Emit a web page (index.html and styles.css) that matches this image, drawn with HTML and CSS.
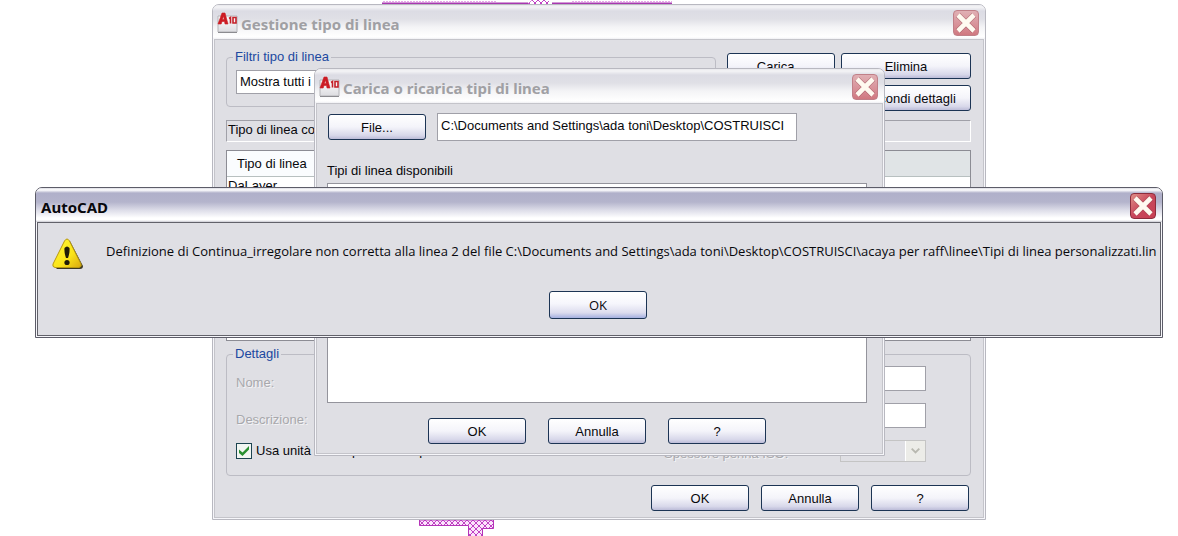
FILE: index.html
```html
<!DOCTYPE html>
<html lang="it">
<head>
    <meta charset="utf-8">
    <meta name="viewport" content="width=device-width, initial-scale=1">
    <title>AutoCAD</title>
    <link rel="stylesheet" href="styles.css">
</head>
<body>
    <!-- Shared icons -->
    <svg class="defs" aria-hidden="true">
        <defs>
            <pattern id="hatch" width="6" height="6" patternUnits="userSpaceOnUse">
                <path d="M0 0l6 6M6 0l-6 6" stroke="#c040c4" stroke-width="1" fill="none"/>
            </pattern>
            <linearGradient id="sheet" x1="0" y1="0" x2="0" y2="1">
                <stop offset="0" stop-color="#ffffff"/>
                <stop offset="1" stop-color="#dcdce0"/>
            </linearGradient>
            <linearGradient id="yellow" x1="0" y1="0" x2="1" y2="1">
                <stop offset="0" stop-color="#fff838"/>
                <stop offset=".6" stop-color="#fbe418"/>
                <stop offset="1" stop-color="#d8a810"/>
            </linearGradient>
            <symbol id="cross" viewBox="0 0 26 26">
                <path d="M5 5L21 21M21 5L5 21" stroke="#8c3c48" stroke-width="6" opacity=".55"/>
                <path d="M5 5L21 21M21 5L5 21" stroke="#fffaf0" stroke-width="4.6"/>
            </symbol>
        </defs>
    </svg>

    <div class="desktop">
        <svg class="drawing drawing-top" width="292" height="6" aria-hidden="true">
            <path d="M0 3.5H290" stroke="#a838b0" stroke-width="2"/>
            <path d="M1 1.5H115M190 1.5H290" stroke="#e8a8ea" stroke-dasharray="2 1"/>
            <path d="M146 0H170V4H146z" fill="#fff"/>
            <path d="M146 3.500L150 0H166L170 3.500V5H146z" fill="url(#hatch)"/>
            <path d="M228 4.5H272" stroke="#c868cc" stroke-dasharray="3 2"/>
        </svg>
        <svg class="drawing drawing-bottom" width="78" height="18" aria-hidden="true">
            <path d="M.5 0V5.500H49.500V18H63.500V8.500H74.500V0z" fill="#fbe4fb"/>
            <path d="M.5 0V5.500H49.500V18H63.500V8.500H74.500V0z" fill="url(#hatch)" stroke="#b434b8"/>
        </svg>

        <!-- Linetype manager -->
        <section class="window manager inactive">
            <header class="titlebar">
                <svg class="app-icon" width="21" height="22" viewBox="0 0 21 22" aria-hidden="true">
                    <path d="M1 4H20V20H1z" fill="url(#sheet)" stroke="#b4b4b8"/>
                    <path d="M1 20.500H20" stroke="#8c8c90"/>
                    <path fill-rule="evenodd" d="M1 12L5 1H8L11 12H8L7.500 9.500H5L4.200 12zM5.500 7.500H7.200L6.500 4z" fill="#cc1c24" stroke="#cc1c24" stroke-width=".6"/>
                    <path d="M12 6.500L13.500 5.500V11.500M16 5.500H19V11H16z" fill="none" stroke="#c42028" stroke-width="1.600"/>
                </svg>
                <h2>Gestione tipo di linea</h2>
                <button class="close" aria-label="Chiudi"><svg width="26" height="26"><use href="#cross"/></svg></button>
            </header>
            <div class="window-body">
                <div class="top-row">
                    <fieldset class="filters">
                        <legend>Filtri tipo di linea</legend>
                        <select aria-label="Filtri tipo di linea">
                            <option>Mostra tutti i tipi di linea</option>
                        </select>
                    </fieldset>
                    <div class="actions">
                        <button class="btn">Carica...</button>
                        <button class="btn">Elimina</button>
                        <button class="btn second">Nascondi dettagli</button>
                    </div>
                </div>
                <div class="current">Tipo di linea corrente:</div>
                <div class="list">
                    <table>
                        <thead><tr><th>Tipo di linea</th><th class="rest"></th></tr></thead>
                        <tbody><tr><td>DaLayer</td><td></td></tr></tbody>
                    </table>
                </div>
                <fieldset class="details">
                    <legend>Dettagli</legend>
                    <div class="row">
                        <label class="dim" for="nome">Nome:</label>
                        <input id="nome" type="text" disabled>
                    </div>
                    <div class="row">
                        <label class="dim" for="descrizione">Descrizione:</label>
                        <input id="descrizione" type="text" disabled>
                    </div>
                    <div class="row units">
                        <input id="unita" type="checkbox" checked>
                        <label for="unita">Usa unità dello spazio carta per la scala</label>
                        <label class="dim pen" for="penna">Spessore penna ISO:</label>
                        <span class="combo">
                            <select id="penna" disabled></select>
                            <svg width="20" height="20" viewBox="0 0 20 20" aria-hidden="true">
                                <path d="M6 7.500L10 11.500L14 7.500" fill="none" stroke="#b8b8b0" stroke-width="2"/>
                            </svg>
                        </span>
                    </div>
                </fieldset>
                <div class="buttons">
                    <button class="btn">OK</button>
                    <button class="btn">Annulla</button>
                    <button class="btn">?</button>
                </div>
            </div>
        </section>

        <!-- Load or reload linetypes -->
        <section class="window loader inactive">
            <header class="titlebar">
                <svg class="app-icon" width="21" height="22" viewBox="0 0 21 22" aria-hidden="true">
                    <path d="M1 4H20V20H1z" fill="url(#sheet)" stroke="#b4b4b8"/>
                    <path d="M1 20.500H20" stroke="#8c8c90"/>
                    <path fill-rule="evenodd" d="M1 12L5 1H8L11 12H8L7.500 9.500H5L4.200 12zM5.500 7.500H7.200L6.500 4z" fill="#cc1c24" stroke="#cc1c24" stroke-width=".6"/>
                    <path d="M12 6.500L13.500 5.500V11.500M16 5.500H19V11H16z" fill="none" stroke="#c42028" stroke-width="1.600"/>
                </svg>
                <h2>Carica o ricarica tipi di linea</h2>
                <button class="close" aria-label="Chiudi"><svg width="26" height="26"><use href="#cross"/></svg></button>
            </header>
            <div class="window-body">
                <div class="file-row">
                    <button class="btn">File...</button>
                    <input type="text" aria-label="File" value="C:\Documents and Settings\ada toni\Desktop\COSTRUISCI">
                </div>
                <p class="caption">Tipi di linea disponibili</p>
                <div class="available"></div>
                <div class="buttons">
                    <button class="btn">OK</button>
                    <button class="btn">Annulla</button>
                    <button class="btn">?</button>
                </div>
            </div>
        </section>

        <!-- Error message -->
        <section class="window alert" role="alertdialog" aria-labelledby="alert-title">
            <header class="titlebar">
                <h2 id="alert-title">AutoCAD</h2>
                <button class="close" aria-label="Chiudi"><svg width="26" height="26"><use href="#cross"/></svg></button>
            </header>
            <div class="window-body">
                <div class="message">
                    <svg width="32" height="32" viewBox="0 0 32 32" aria-hidden="true">
                        <path d="M16 3Q18 2 19 5L31 28Q31 31 28 31H5L3 29z" fill="#3c3824"/>
                        <path d="M12.500 3Q15 -1 17.500 3L29 26Q30 29 27 29.500H3Q0 29 1 26z" fill="url(#yellow)" stroke="#b89810"/>
                        <path d="M12.500 10Q15 7 17.500 10Q18 14 16 20H14Q12 14 12.500 10z" fill="#201c08"/>
                        <circle cx="15" cy="24.500" r="2.600" fill="#201c08"/>
                    </svg>
                    <p>Definizione di Continua_irregolare non corretta alla linea 2 del file C:\Documents and Settings\ada toni\Desktop\COSTRUISCI\acaya per raff\linee\Tipi di linea personalizzati.lin</p>
                </div>
                <div class="buttons">
                    <button class="btn">OK</button>
                </div>
            </div>
        </section>
    </div>
</body>
</html>
```
FILE: styles.css
```css
* {
    box-sizing: border-box;
}
body {
    margin: 0;
    background: #fff;
    color: #08080c;
    font-family: "Liberation Sans", Arial, sans-serif;
    font-size: 13px;
    line-height: 16px;
}
button, input, select {
    font: inherit;
    color: inherit;
    margin: 0;
}
h2, p {
    margin: 0;
}
.defs {
    position: absolute;
    width: 0;
    height: 0;
}

/* Desktop: windows are stacked freely on it */
.desktop {
    position: relative;
    min-height: 100vh;
    overflow: hidden;
}
.drawing {
    position: absolute;
}
.drawing-top {
    left: 382px;
    top: 0;
}
.drawing-bottom {
    left: 419px;
    top: 520px;
}
.window {
    position: absolute;
    border: 1px solid #5c5c68;
    border-radius: 7px 7px 0 0;
    padding: 0 1px 1px;
    background: #f6f6fa;
}
.window.inactive {
    border-color: #b8b8c0;
}
.manager {
    left: 212px;
    right: 192px;
    top: 4px;
}
.loader {
    left: 314px;
    right: 293px;
    top: 68px;
}
.alert {
    left: 35px;
    right: 15px;
    top: 187px;
}

/* Title bar */
.titlebar {
    display: flex;
    align-items: center;
    gap: 3px;
    height: 34px;
    margin: 0 -1px;
    padding: 1px 6px 0 5px;
    border-radius: 6px 6px 0 0;
    background: linear-gradient(#dcdce4 0, #fff 2px, #b0b0ca 5px, #b4b4cc 14px, #dcdce8 22px, #fff 30px, #fff 32px, #c8c8d0 34px);
}
.titlebar h2 {
    flex: 1;
    font-family: "Noto Sans", sans-serif;
    font-size: 15px;
    line-height: 20px;
    font-weight: 700;
    padding-top: 2px;
}
.inactive .titlebar {
    padding-left: 4px;
    background: linear-gradient(#e8e8ec 0, #f4f4f6 2px, #dcdce4 6px, #e0e0e6 14px, #f4f4f6 22px, #fff 32px, #f0f0f4 34px);
}
.inactive .titlebar h2 {
    color: #a0a0a4;
}
.close {
    width: 26px;
    height: 26px;
    padding: 0;
    border: 1px solid #8c2c3c;
    border-radius: 4px;
    background: linear-gradient(135deg, #e09088, #c8485c 50%, #c84054);
    overflow: hidden;
}
.close svg {
    display: block;
    margin: -1px;
}
.inactive .close {
    border-color: #c08088;
    background: linear-gradient(#e0b0b4, #d89098 60%, #d07880);
}
.window-body {
    border: 1px solid #62626a;
    background: #dfdfe4;
}
.inactive .window-body {
    border-color: #c4c4ca;
}

/* Controls */
.btn {
    width: 98px;
    height: 26px;
    padding: 1px 0 0;
    border: 1px solid #1c3454;
    border-radius: 3px;
    background: linear-gradient(#fff, #f4f4fa 50%, #d8d8ea 85%, #bcbcd8);
    white-space: nowrap;
}
.buttons {
    display: flex;
}
input[type="text"], select {
    border: 1px solid #a0a0a8;
    border-radius: 0;
    background: #fff;
    padding: 0 3px;
}
select {
    appearance: none;
}
fieldset {
    min-width: 0;
    margin: 0;
    border: 1px solid #bcbcc4;
    border-radius: 4px;
}
legend {
    padding: 0 2px;
    margin-left: -3px;
    color: #2048a0;
}
.dim {
    color: #a8a8ac;
    text-shadow: 1px 1px #f4f4f6;
}

/* Linetype manager */
.manager .window-body {
    padding: 9px 12px 6px 11px;
}
.top-row {
    display: flex;
    gap: 11px;
}
.filters {
    flex: 1;
    height: 58px;
    padding: 5px 9px 0;
}
.filters select {
    display: block;
    width: 240px;
    height: 24px;
}
.actions {
    display: grid;
    grid-template-columns: 108px 130px;
    grid-auto-rows: 26px;
    gap: 6px;
    margin-top: 4px;
}
.actions .btn {
    width: 100%;
}
.actions .second {
    grid-column: 2;
}
.current {
    height: 22px;
    margin-top: 9px;
    padding: 1px;
    border: 1px solid;
    border-color: #a0a0a8 #fff #fff #a0a0a8;
}
.list {
    height: 191px;
    margin-top: 8px;
    border: 1px solid #8c8c94;
    background: #fff;
}
.list table {
    width: 100%;
    border-collapse: collapse;
}
.list th {
    width: 110px;
    height: 25px;
    padding: 2px 10px 0;
    border-bottom: 1px solid #b8c0c0;
    background: #fafcfe;
    font-weight: normal;
    text-align: left;
}
.list th.rest {
    width: auto;
    background: #e0e4e6;
}
.list td {
    height: 20px;
    padding: 0 1px;
}
.details {
    margin-top: 5px;
    padding: 4px 44px 13px 9px;
    display: grid;
    gap: 12px;
}
.row {
    display: flex;
    align-items: flex-end;
    gap: 4px;
}
.row label {
    flex: 0 0 90px;
}
.row input[type="text"] {
    flex: 1;
    height: 25px;
}
.units {
    align-items: center;
}
.units label {
    flex: none;
}
.units input {
    appearance: none;
    width: 16px;
    height: 16px;
    border: 1px solid #1c4450;
    background: #f2f6f2;
    display: grid;
    place-items: center;
}
.units input:checked::before {
    content: "";
    width: 10px;
    height: 10px;
    background: #289030;
    clip-path: polygon(0 35%, 35% 65%, 100% 0, 100% 35%, 35% 100%, 0 70%);
}
.units .pen {
    align-self: flex-end;
    margin-left: auto;
    width: 172px;
}
.combo {
    display: flex;
    width: 86px;
    height: 22px;
    border: 1px solid #c4c4c4;
    background: #dfdfe4;
}
.combo select {
    flex: 1;
    min-width: 0;
    border: 0;
    background: none;
}
.combo svg {
    background: #ecece8;
    border-left: 1px solid #fff;
}
.manager .buttons {
    justify-content: flex-end;
    gap: 12px;
    margin-top: 9px;
    padding-right: 2px;
}

/* Load or reload linetypes */
.loader .window-body {
    padding: 9px 15px 9px 10px;
}
.file-row {
    display: flex;
    align-items: center;
    gap: 11px;
    padding-left: 1px;
}
.file-row input {
    width: 360px;
    height: 28px;
    padding-bottom: 4px;
}
.caption {
    margin-top: 22px;
}
.available {
    height: 220px;
    margin-top: 4px;
    border: 1px solid #94949c;
    background: #fff;
}
.loader .buttons {
    justify-content: center;
    gap: 22px;
    margin-top: 15px;
}

/* Error message */
.alert .window-body {
    padding: 15px 16px 16px 14px;
    font-family: "Open Sans", sans-serif;
}
.message {
    display: flex;
    gap: 22px;
}
.message svg {
    flex: none;
}
.message p {
    padding-top: 5px;
    white-space: nowrap;
}
.alert .buttons {
    justify-content: center;
    margin-top: 21px;
}
.alert .btn {
    height: 28px;
    padding: 0;
    background: linear-gradient(#fff, #f6f6fc 45%, #dcdcee 80%, #a4b0e0);
}
```
